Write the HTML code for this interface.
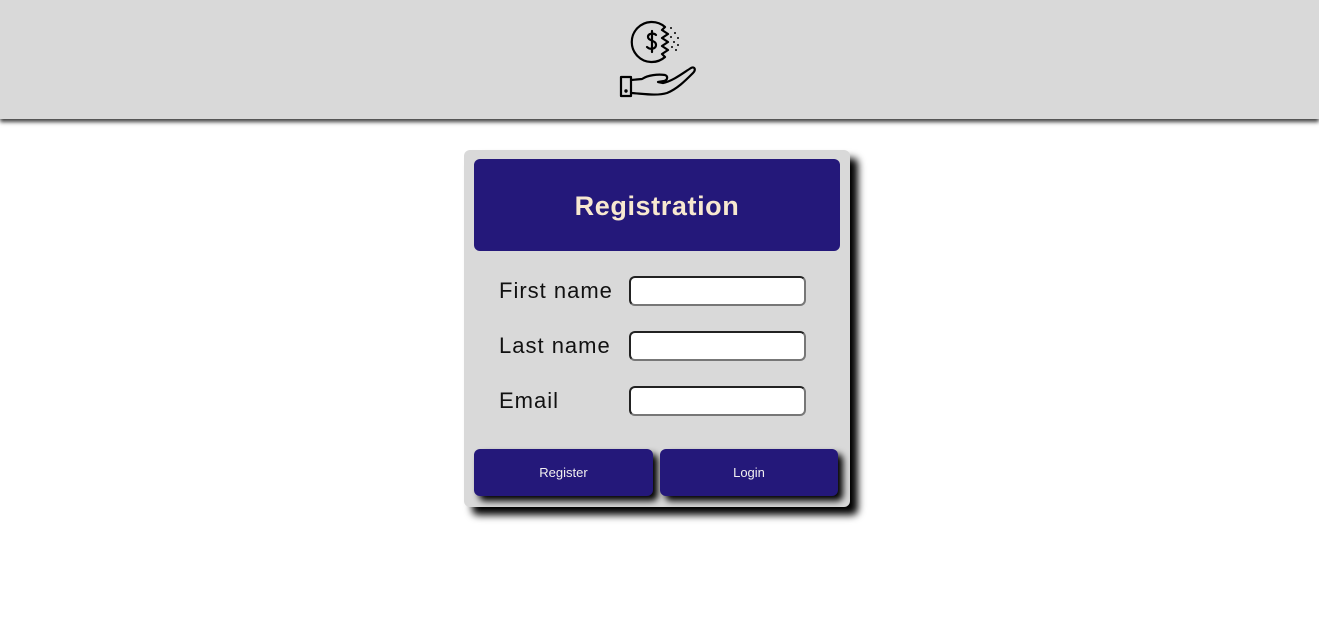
<!DOCTYPE html>
<html><head><meta charset="utf-8"><style>
*{box-sizing:border-box;margin:0;padding:0}
body{width:1319px;height:622px;background:#fff;font-family:"Liberation Sans",sans-serif;position:relative;overflow:hidden}
.top{position:absolute;left:0;top:0;width:1319px;height:119px;background:#d9d9d9;box-shadow:0 3px 4px rgba(0,0,0,.75)}
.logo{position:absolute;left:617px;top:20px}
.card{position:absolute;left:464px;top:150px;width:386px;height:357px;background:#d9d9d9;border-radius:6px;box-shadow:8px 8px 8px #000}
.hdr{position:absolute;left:10px;top:9px;width:366px;height:92px;background:#24187a;border-radius:6px;color:#f7e8d0;font-weight:bold;font-size:27px;letter-spacing:.6px;text-align:center;line-height:94px}
.lbl{position:absolute;left:35px;font-size:22px;letter-spacing:1px;color:#111}
.in{position:absolute;left:165px;width:177px;height:30px;background:#fff;border:2px solid #222;border-right-color:#777;border-bottom-color:#777;border-radius:6px}
.btn{position:absolute;top:299px;height:47px;background:#24187a;border-radius:6px;color:#f2f0f0;font-size:13px;text-align:center;line-height:47px;box-shadow:5px 5px 7px #000}
</style></head><body>
<div class="top">
<svg class="logo" width="80" height="80" viewBox="0 0 80 80" fill="none" stroke="#000" stroke-width="2.2" stroke-linecap="round" stroke-linejoin="round">
<path d="M48 7 A20 20 0 1 0 48 37 L45 34 L51 30 L45 26 L51 22 L45 18 L51 14 L45 10 Z"/>
<path d="M39 15 C37 13 31 13 31 17 C31 21 39 20 39 25 C39 29 33 30 30 27"/>
<line x1="35" y1="11" x2="35" y2="32"/>
<g fill="#000" stroke="none"><circle cx="54" cy="8" r="1"/><circle cx="58" cy="13" r="1"/><circle cx="54" cy="17" r="1"/><circle cx="61" cy="18" r="1"/><circle cx="57" cy="22" r="1"/><circle cx="61" cy="25" r="1"/><circle cx="55" cy="27" r="1"/><circle cx="59" cy="30" r="1"/></g>
<rect x="4" y="57" width="10" height="19"/>
<path d="M14 60 L25 59 C31 55 41 54 48 55 C51 56 51 60 47 61 L41 62 L46 63 C56 61 66 53 74 48 C78 46 79 50 76 53 C68 61 60 69 50 73 C40 76 28 74 14 73"/>
<circle cx="9" cy="71" r=".6" fill="#000"/>
</svg>
</div>
<div class="card">
<div class="hdr">Registration</div>
<div class="lbl" style="top:128px">First name</div><div class="in" style="top:126px"></div>
<div class="lbl" style="top:183px">Last name</div><div class="in" style="top:181px"></div>
<div class="lbl" style="top:238px">Email</div><div class="in" style="top:236px"></div>
<div class="btn" style="left:10px;width:179px">Register</div>
<div class="btn" style="left:196px;width:178px">Login</div>
</div>
</body></html>
